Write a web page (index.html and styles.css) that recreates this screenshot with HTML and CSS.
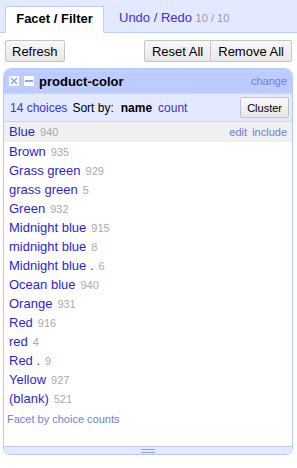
FILE: index.html
```html
<!DOCTYPE html>
<html lang="en">

<head>
    <meta charset="UTF-8">
    <title>Facet / Filter</title>
    <link rel="stylesheet" href="styles.css">
</head>

<body>
    <div class="tabs">
        <a href="javascript:;" class="tab current">Facet / Filter</a>
        <a href="javascript:;" class="tab">Undo / Redo <span class="hist">10 / 10</span></a>
    </div>

    <div class="toolbar">
        <button class="btn">Refresh</button>
        <div class="group">
            <button class="btn">Reset All</button><button class="btn">Remove All</button>
        </div>
    </div>

    <div class="facet">
        <div class="facet-title">
            <span class="icon close">
                <svg width="10" height="10" viewBox="0 0 10 10"><rect width="10" height="10" fill="#fff"/><path d="M2 2 L8 8 M8 2 L2 8" stroke="#8fa3e8" stroke-width="1.6"/></svg>
            </span>
            <span class="icon min">
                <svg width="10" height="10" viewBox="0 0 10 10"><rect width="10" height="10" fill="#fff"/><rect x="1" y="4" width="8" height="2" fill="#8fa3e8"/></svg>
            </span>
            <span class="name">product-color</span>
            <a href="javascript:;" class="change">change</a>
        </div>
        <div class="facet-controls">
            <a href="javascript:;">14 choices</a>
            <span class="sort">Sort by:</span>
            <b>name</b>
            <a href="javascript:;">count</a>
            <button class="btn cluster">Cluster</button>
        </div>
        <ul class="choices">
            <li class="hover"><a href="javascript:;">Blue</a> <span class="count">940</span>
                <span class="acts"><a href="javascript:;">edit</a> <a href="javascript:;">include</a></span></li>
            <li><a href="javascript:;">Brown</a> <span class="count">935</span></li>
            <li><a href="javascript:;">Grass green</a> <span class="count">929</span></li>
            <li><a href="javascript:;">grass green</a> <span class="count">5</span></li>
            <li><a href="javascript:;">Green</a> <span class="count">932</span></li>
            <li><a href="javascript:;">Midnight blue</a> <span class="count">915</span></li>
            <li><a href="javascript:;">midnight blue</a> <span class="count">8</span></li>
            <li><a href="javascript:;">Midnight blue .</a> <span class="count">6</span></li>
            <li><a href="javascript:;">Ocean blue</a> <span class="count">940</span></li>
            <li><a href="javascript:;">Orange</a> <span class="count">931</span></li>
            <li><a href="javascript:;">Red</a> <span class="count">916</span></li>
            <li><a href="javascript:;">red</a> <span class="count">4</span></li>
            <li><a href="javascript:;">Red .</a> <span class="count">9</span></li>
            <li><a href="javascript:;">Yellow</a> <span class="count">927</span></li>
            <li><a href="javascript:;">(blank)</a> <span class="count">521</span></li>
        </ul>
        <div class="facet-more"><a href="javascript:;">Facet by choice counts</a></div>
        <div class="resize"><span></span></div>
    </div>
</body>

</html>
```

FILE: styles.css
```css
* {
    margin: 0;
    padding: 0;
    box-sizing: border-box;
}

body {
    font-family: "Liberation Sans", Arial, sans-serif;
    font-size: 13px;
    color: #000;
    background-color: #fff;
}

a {
    text-decoration: none;
    color: #2b1fd6;
}

.tabs {
    display: flex;
    align-items: flex-end;
    height: 33px;
    padding-left: 5px;
    background-color: #e3e9ff;
    border-bottom: 1px solid #bcccff;
}

.tab {
    display: block;
    height: 27px;
    line-height: 24px;
    padding: 0 10px;
    margin-bottom: -1px;
    color: #3b2fd6;
    font-size: 13px;
}

.tab.current {
    width: 99px;
    text-align: center;
    color: #000;
    font-weight: bold;
    background-color: #fff;
    border: 1px solid #bcccff;
    border-bottom-color: #fff;
    margin-right: 5px;
}

.hist {
    color: #999;
    font-size: 11px;
}

.toolbar {
    display: flex;
    justify-content: space-between;
    padding: 7px 5px 6px 5px;
}

.group {
    display: flex;
}

.btn {
    height: 22px;
    padding: 0 6px;
    font-family: "Liberation Sans", Arial, sans-serif;
    font-size: 13px;
    color: #000;
    background: linear-gradient(#f8f8f8, #e8e8e8);
    border: 1px solid #c4c4c4;
    border-radius: 2px;
}

.group .btn {
    padding: 0 7px;
}

.group .btn:first-child {
    border-radius: 2px 0 0 2px;
}

.group .btn:last-child {
    border-left: none;
    border-radius: 0 2px 2px 0;
}

.facet {
    margin: 0 4px 0 3px;
    border: 1px solid #b7c7ff;
    border-radius: 8px 8px 7px 7px;
    overflow: hidden;
}

.facet-title {
    display: flex;
    align-items: center;
    height: 24px;
    padding: 0 5px 0 5px;
    background-color: #bcccff;
}

.icon {
    display: flex;
    margin-right: 5px;
}

.icon svg {
    display: block;
}

.name {
    flex: 1;
    font-weight: bold;
    font-size: 13px;
}

.change {
    font-size: 11px;
    color: #6a7fe0;
}

.facet-controls {
    display: flex;
    align-items: center;
    height: 28px;
    padding: 0 3px 0 6px;
    background-color: #e3e9ff;
    border-top: 1px solid #c8d5ff;
    font-size: 12px;
}

.facet-controls a {
    color: #3b2fd6;
    margin-right: 5px;
}

.facet-controls .sort {
    margin-right: 7px;
}

.facet-controls b {
    margin-right: 6px;
}

.cluster {
    margin-left: auto;
    height: 21px;
    font-size: 11px;
}

.choices {
    list-style-type: none;
    border-top: 1px solid #c8d5ff;
}

.choices li {
    display: flex;
    align-items: baseline;
    height: 19px;
    line-height: 20px;
    padding: 0 5px 0 5px;
}

.choices li.hover {
    height: 20px;
    background-color: #f0f0f0;
}

.count {
    margin-left: 5px;
    color: #aaa;
    font-size: 11px;
}

.acts {
    margin-left: auto;
    font-size: 11px;
    word-spacing: 2px;
}

.acts a {
    color: #6a7fe0;
}

.facet-more {
    padding: 5px 3px 0 3px;
    height: 38px;
    font-size: 11px;
}

.facet-more a {
    color: #6a7fe0;
}

.resize {
    display: flex;
    justify-content: center;
    align-items: center;
    height: 8px;
    background-color: #e3e9ff;
    border-top: 1px solid #b7c7ff;
}

.resize span {
    width: 14px;
    height: 4px;
    border-top: 1px solid #8fa3e8;
    border-bottom: 1px solid #8fa3e8;
}
```
